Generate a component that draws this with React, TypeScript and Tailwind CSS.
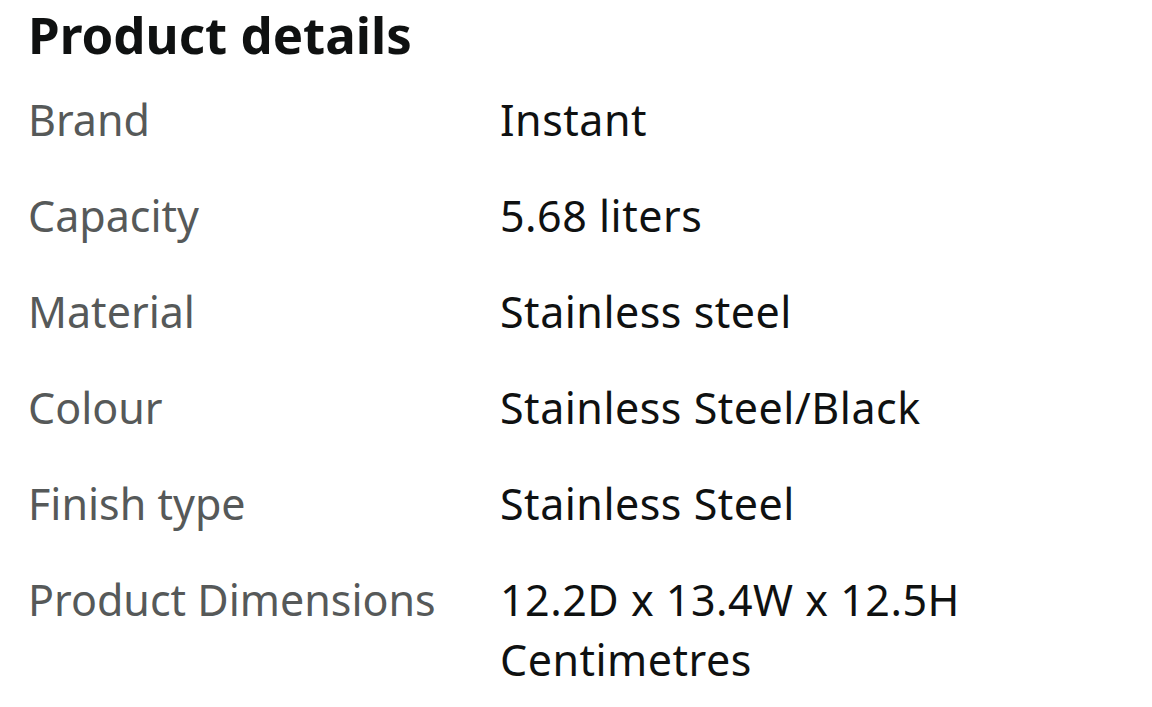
import React from 'react'

const rows: [string, string][] = [
    ['Brand', 'Instant'],
    ['Capacity', '5.68 liters'],
    ['Material', 'Stainless steel'],
    ['Colour', 'Stainless Steel/Black'],
    ['Finish type', 'Stainless Steel'],
    ['Product Dimensions', '12.2D x 13.4W x 12.5H Centimetres'],
]

export default function App() {
    return (
        <div className="min-h-screen bg-white px-[28px] pt-[4px] font-['Noto_Sans',sans-serif] text-[#0F1111]">
            <h2 className="text-[51px] font-bold leading-[60px] mb-[8px]">Product details</h2>
            <div className="w-[1096px]">
                {rows.map(([label, value]) => (
                    <div key={label} className="grid grid-cols-[472px_1fr] py-[18px] text-[43px] leading-[60px]">
                        <div className="text-[#565959] pr-4">{label}</div>
                        <div className="max-w-[540px] tracking-[0.5px]">{value}</div>
                    </div>
                ))}
            </div>
        </div>
    )
}
